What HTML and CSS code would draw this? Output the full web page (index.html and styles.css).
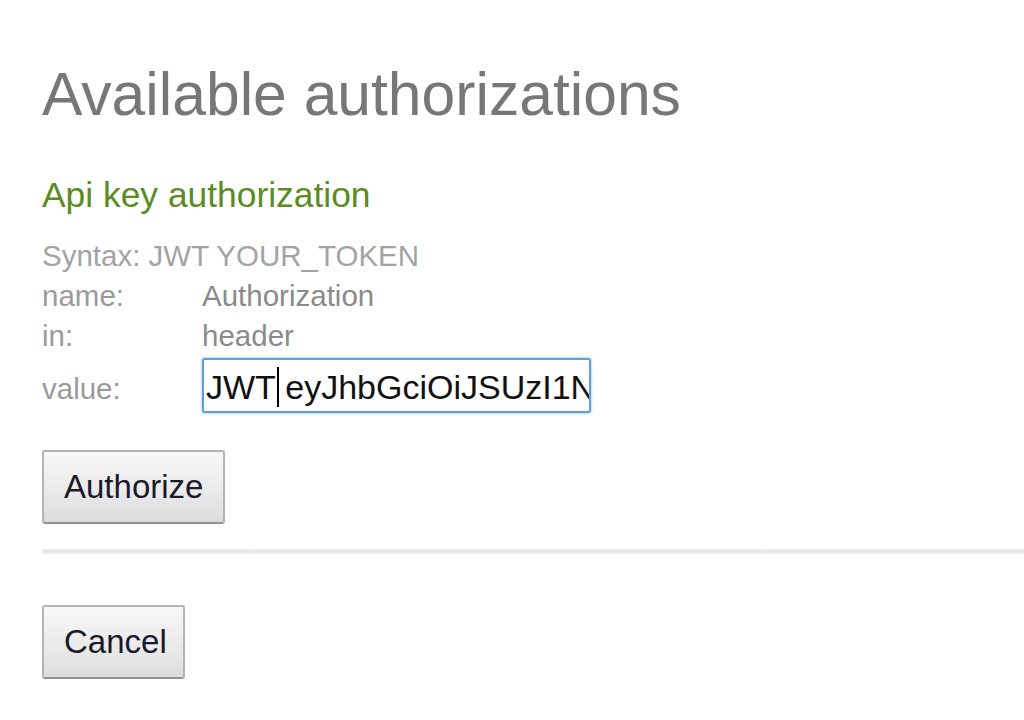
FILE: index.html
```html
<!DOCTYPE html>
<html lang="en">
<head>
<meta charset="utf-8">
<title>Available authorizations</title>
<link rel="stylesheet" href="styles.css">
</head>
<body>
<div class="auth-page">
  <h1 class="title">Available authorizations</h1>
  <section class="auth-block">
    <h2 class="auth-name">Api key authorization</h2>
    <p class="syntax">Syntax: JWT YOUR_TOKEN</p>
    <div class="fields">
      <div class="label">name:</div>
      <div class="val">Authorization</div>
      <div class="label">in:</div>
      <div class="val">header</div>
      <div class="label label-value">value:</div>
      <div class="input-cell">
        <div class="input" role="textbox">JWT<span class="caret"></span> eyJhbGciOiJSUzI1NiIsInR5cCI6IkpXVCJ9</div>
      </div>
    </div>
    <div class="actions">
      <button class="btn" type="button">Authorize</button>
    </div>
  </section>
  <div class="divider"></div>
  <div class="actions">
    <button class="btn cancel" type="button">Cancel</button>
  </div>
</div>
</body>
</html>
```

FILE: styles.css
```css
html, body {
  margin: 0;
  padding: 0;
  background: #ffffff;
  overflow: hidden;
}

.auth-page {
  padding: 58px 0 0 42px;
  font-family: "Liberation Sans", Arial, sans-serif;
}

.title {
  margin: 0;
  font-size: 60.6px;
  line-height: 72px;
  font-weight: normal;
  color: #777777;
}

.auth-name {
  margin: 44px 0 0 0;
  font-size: 35.4px;
  line-height: 42px;
  font-weight: normal;
  color: #5b8c22;
}

.syntax {
  margin: 20px 0 0 0;
  font-size: 29.5px;
  line-height: 40px;
  color: #a3a3a3;
}

.fields {
  display: grid;
  grid-template-columns: 160px auto;
  align-items: baseline;
  font-size: 29.5px;
  line-height: 40px;
}

.label {
  color: #9a9a9a;
}

.val {
  color: #8a8a8a;
}

.input-cell {
  padding-top: 2px;
}

.input {
  box-sizing: border-box;
  width: 389px;
  height: 55px;
  padding: 4px 2px 0 2px;
  border: 2px solid #5f9fe0;
  border-radius: 3px;
  box-shadow: 0 0 2px 1px rgba(120, 170, 235, 0.45);
  font-size: 34px;
  line-height: 47px;
  color: #111111;
  white-space: nowrap;
  overflow: hidden;
  background: #ffffff;
}

.caret {
  display: inline-block;
  width: 2px;
  height: 40px;
  margin-left: 1px;
  margin-right: -3px;
  background: #000000;
  vertical-align: -8px;
}

.actions {
  display: flex;
}

.auth-block .actions {
  margin-top: 37px;
}

.btn {
  box-sizing: border-box;
  height: 74px;
  padding: 0 20px;
  border: 2px solid #b4b4b4;
  border-bottom-color: #939393;
  border-radius: 3px;
  background: linear-gradient(#f8f8f8, #e9e9e9 60%, #dcdcdc);
  font-family: "Liberation Sans", Arial, sans-serif;
  font-size: 33px;
  line-height: 70px;
  color: #1a1a2a;
  cursor: pointer;
}

.cancel {
  width: 143px;
}

.divider {
  margin-top: 25px;
  height: 5px;
  background: linear-gradient(#efefef, #e3e3e3 50%, #efefef);
}

.divider + .actions {
  margin-top: 51px;
}
```
